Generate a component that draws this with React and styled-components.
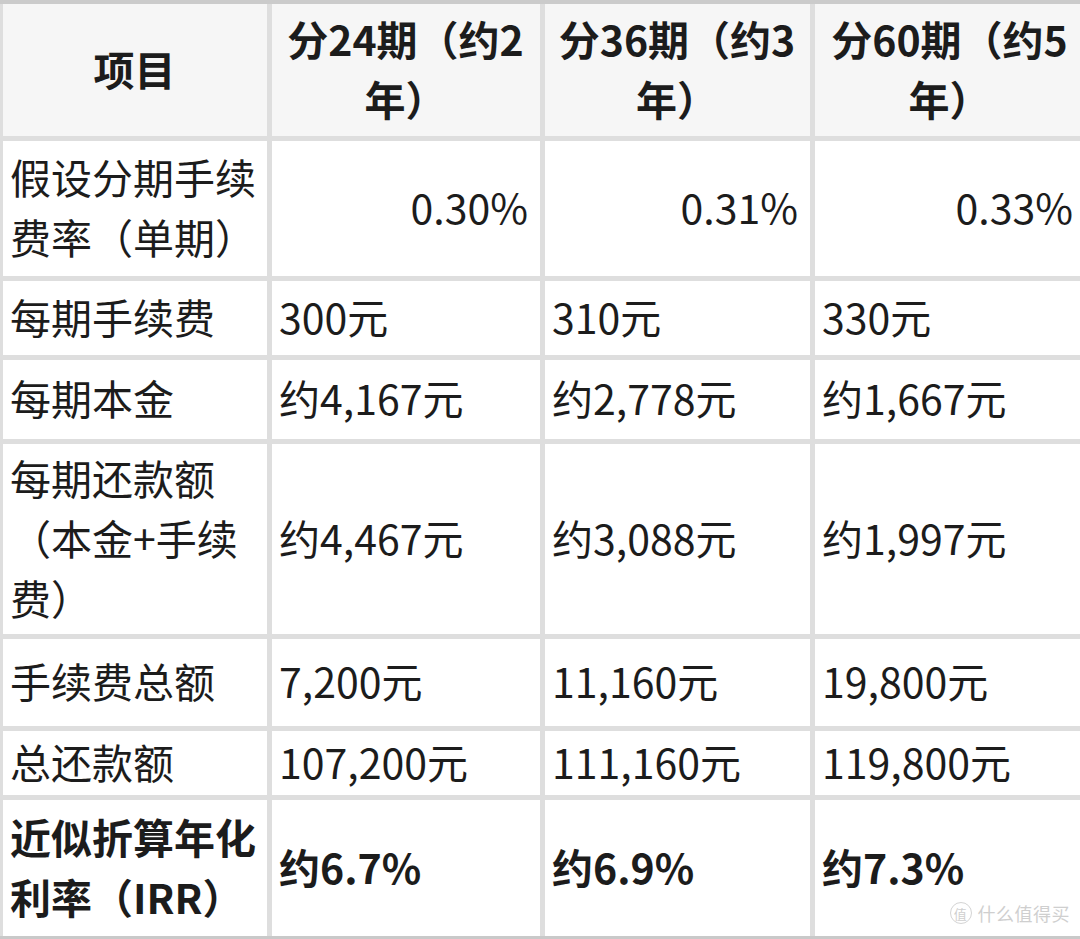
import React from "react";
import styled, { createGlobalStyle } from "styled-components";

const GlobalStyle = createGlobalStyle`
	html, body {
		margin: 0;
		padding: 0;
		background: #ffffff;
	}
	body {
		font-family: "Noto Sans CJK SC", "Noto Sans", sans-serif;
		color: #1c1c1c;
	}
`;

const Page = styled.div`
	position: relative;
	width: 1080px;
	height: 939px;
	overflow: hidden;
`;

const Table = styled.div`
	display: flex;
	flex-direction: column;
	gap: 5px;
	width: 1090px;
	background: #dedede;
	border-top: 4px solid #cbcbcb;
	border-bottom: 3px solid #c9c9c9;
	padding-left: 3px;
`;

const Row = styled.div`
	display: grid;
	grid-template-columns: 264px 268px 265px 270px;
	gap: 5px;
	height: ${p => p.h}px;
`;

const Cell = styled.div`
	display: flex;
	align-items: center;
	justify-content: ${p => (p.align === "center" ? "center" : p.align === "right" ? "flex-end" : "flex-start")};
	text-align: ${p => p.align || "left"};
	padding: 0 ${p => (p.align === "right" ? "12px" : "8px")} 5px 7px;
	background: ${p => (p.head ? "#f6f6f6" : "#ffffff")};
	font-size: 41px;
	line-height: 60px;
	font-weight: ${p => (p.bold ? 700 : 400)};
	box-sizing: border-box;
	overflow: hidden;
`;

const Watermark = styled.div`
	position: absolute;
	right: 10px;
	bottom: 13px;
	display: flex;
	align-items: center;
	gap: 6px;
	color: #cfcfcf;
	font-size: 18px;
	letter-spacing: 0.5px;
`;

const Badge = styled.span`
	display: inline-flex;
	align-items: center;
	justify-content: center;
	width: 20px;
	height: 20px;
	border: 1.5px solid #d4d4d4;
	border-radius: 50%;
	font-size: 13px;
	line-height: 1;
`;

const rows = [
	{ h: 135, label: "假设分期手续费率（单期）", values: ["0.30%", "0.31%", "0.33%"], align: "right" },
	{ h: 74, label: "每期手续费", values: ["300元", "310元", "330元"] },
	{ h: 79, label: "每期本金", values: ["约4,167元", "约2,778元", "约1,667元"] },
	{ h: 190, label: "每期还款额（本金+手续费）", values: ["约4,467元", "约3,088元", "约1,997元"] },
	{ h: 87, label: "手续费总额", values: ["7,200元", "11,160元", "19,800元"] },
	{ h: 64, label: "总还款额", values: ["107,200元", "111,160元", "119,800元"] },
	{ h: 136, label: "近似折算年化利率（IRR）", values: ["约6.7%", "约6.9%", "约7.3%"], bold: true },
];

const heads = ["项目", "分24期（约2年）", "分36期（约3年）", "分60期（约5年）"];

const App = () => {
	return (
		<Page>
			<GlobalStyle />
			<Table>
				<Row h={132}>
					{heads.map(h => (
						<Cell key={h} head bold align="center">{h}</Cell>
					))}
				</Row>
				{rows.map(r => (
					<Row key={r.label} h={r.h}>
						<Cell bold={r.bold}>{r.label}</Cell>
						{r.values.map(v => (
							<Cell key={v} bold={r.bold} align={r.align}>{v}</Cell>
						))}
					</Row>
				))}
			</Table>
			<Watermark>
				<Badge>值</Badge>
				<span>什么值得买</span>
			</Watermark>
		</Page>
	);
};

export default App;
